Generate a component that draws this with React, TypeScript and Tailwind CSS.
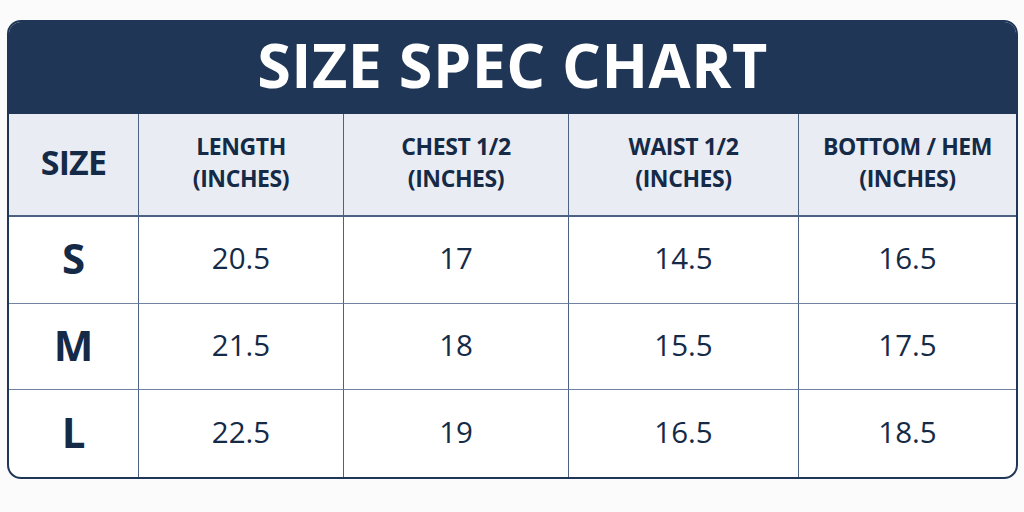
import React from "react";

const headers = [
  ["SIZE"],
  ["LENGTH", "(INCHES)"],
  ["CHEST 1/2", "(INCHES)"],
  ["WAIST 1/2", "(INCHES)"],
  ["BOTTOM / HEM", "(INCHES)"],
];

const rows = [
  ["S", "20.5", "17", "14.5", "16.5"],
  ["M", "21.5", "18", "15.5", "17.5"],
  ["L", "22.5", "19", "16.5", "18.5"],
];

export default function App() {
  return (
    <div
      className="w-[1024px] h-[512px] bg-[#fbfbfb] pt-[20px] pl-[7px]"
      style={{ fontFamily: '"Open Sans", "Noto Sans", sans-serif' }}
    >
      <div className="w-[1011px] h-[459px] rounded-[14px] border-2 border-[#1f3657] bg-white overflow-hidden flex flex-col">
        <div className="h-[92px] bg-[#1f3656] flex items-center justify-center pb-[7px]">
          <h1 className="text-white text-[61px] font-bold tracking-[0.5px] leading-none">
            SIZE SPEC CHART
          </h1>
        </div>
        <div className="grid grid-cols-[130px_205px_225px_230px_1fr] grid-rows-[103px_87px_86px_1fr] flex-1 text-[#152a47]">
          {headers.map((h, i) => (
            <div
              key={i}
              className={`bg-[#e9edf3] border-b-2 border-b-[#4d6183] flex flex-col items-center justify-center pb-[6px] ${
                i < 4 ? "border-r-[1.5px] border-r-[#4d6183]" : ""
              }`}
            >
              {h.length === 1 ? (
                <span className="text-[34px] font-bold tracking-[-0.8px] leading-none">{h[0]}</span>
              ) : (
                h.map((t, j) => (
                  <span key={j} className="text-[23px] font-bold leading-[32px] tracking-[-0.4px]">
                    {t}
                  </span>
                ))
              )}
            </div>
          ))}
          {rows.map((r, ri) =>
            r.map((c, ci) => (
              <div
                key={`${ri}-${ci}`}
                className={`flex items-center justify-center pb-[4px] ${
                  ci < 4 ? "border-r-[1.5px] border-r-[#4d6183]" : ""
                } ${ri < 2 ? "border-b-[1.5px] border-b-[#7083a3]" : ""}`}
              >
                {ci === 0 ? (
                  <span className="text-[42px] font-bold leading-none">{c}</span>
                ) : (
                  <span className="text-[29.5px] font-medium leading-none">{c}</span>
                )}
              </div>
            ))
          )}
        </div>
      </div>
    </div>
  );
}
